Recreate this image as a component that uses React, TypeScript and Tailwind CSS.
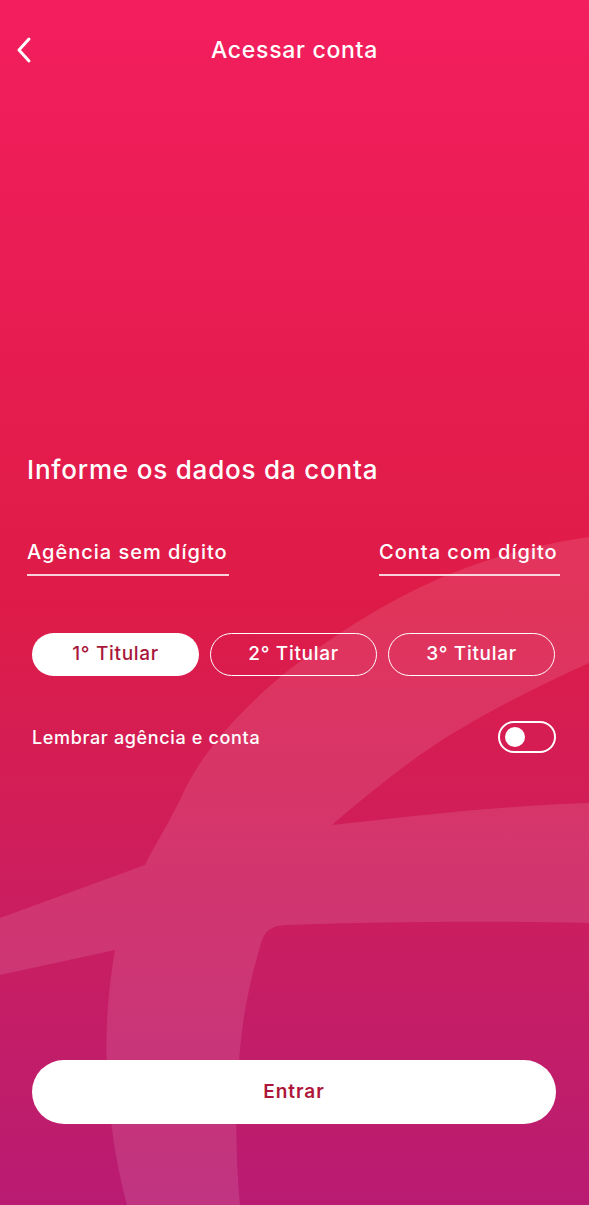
import { useState } from 'react';

const font = { fontFamily: 'Inter, "Open Sans", sans-serif' };

const BackgroundMark = () => (
  <svg
    className="pointer-events-none absolute inset-0 h-full w-full"
    viewBox="0 0 589 1205"
    preserveAspectRatio="none"
  >
    <path
      d="M589 537 C500 550 420 578 330 640 C270 680 205 740 180 800 C165 830 152 850 145 865 L0 918 L0 975 L115 950 C108 990 104 1040 108 1080 C110 1130 118 1170 127 1205 L240 1205 C236 1160 235 1110 238 1080 C240 1030 247 990 262 940 C266 930 272 926 285 925 C400 921 500 921 589 923 L589 803 C500 806 420 815 332 825 C370 792 410 760 450 735 C495 708 540 685 589 663 Z"
      fill="#ffffff"
      fillOpacity="0.11"
    />
  </svg>
);

const Field = ({ label, width }: { label: string; width: string }) => (
  <div className={`flex flex-col ${width}`}>
    <span className="text-[20px] leading-[28px] font-medium tracking-[1px] whitespace-nowrap text-white">
      {label}
    </span>
    <div className="mt-[8px] h-[2px] w-full bg-white/80" />
  </div>
);

const App = () => {
  const [holder, setHolder] = useState(1);
  const [remember, setRemember] = useState(false);

  return (
    <div
      className="relative h-[1205px] w-full overflow-hidden bg-linear-to-b from-[#f31e5e] via-[#de1b47] to-[#b91b72]"
      style={font}
    >
      <BackgroundMark />
      <div className="relative flex h-full flex-col">
        <header className="mt-[28px] grid h-[44px] grid-cols-[60px_1fr_60px] items-center">
          <button className="flex h-full items-center pl-[15px]">
            <svg width="18" height="28" viewBox="0 0 18 28" fill="none">
              <path
                d="M14 3 L4 14 L14 25"
                stroke="#ffffff"
                strokeWidth="3"
                strokeLinecap="round"
                strokeLinejoin="round"
              />
            </svg>
          </button>
          <h1 className="text-center text-[23px] font-medium tracking-[0.7px] text-white">
            Acessar conta
          </h1>
          <div />
        </header>

        <div className="mt-[381px] pr-[29px] pl-[27px]">
          <h2 className="text-[26px] leading-[34px] font-medium tracking-[0.8px] text-white">
            Informe os dados da conta
          </h2>
          <div className="mt-[51px] flex justify-between">
            <Field label="Agência sem dígito" width="w-[202px]" />
            <Field label="Conta com dígito" width="w-[181px]" />
          </div>
        </div>

        <div className="mt-[57px] grid grid-cols-3 gap-[11px] pr-[34px] pl-[32px]">
          {[1, 2, 3].map((n) => (
            <button
              key={n}
              onClick={() => setHolder(n)}
              className={
                holder === n
                  ? 'h-[43px] rounded-full bg-white text-[19px] font-medium tracking-[0.7px] text-[#a8173b]'
                  : 'h-[43px] rounded-full border-[1.5px] border-white text-[19px] font-medium tracking-[0.7px] text-white'
              }
            >
              {n}° Titular
            </button>
          ))}
        </div>

        <div className="mt-[45px] flex items-center justify-between pr-[33px] pl-[32px]">
          <span className="text-[18px] font-medium tracking-[0.65px] text-white">
            Lembrar agência e conta
          </span>
          <button
            onClick={() => setRemember(!remember)}
            className="flex h-[32px] w-[58px] items-center rounded-full border-2 border-white px-[5px]"
          >
            <span className="h-[20px] w-[20px] rounded-full bg-white" />
          </button>
        </div>

        <div className="mt-auto mb-[81px] pr-[33px] pl-[32px]">
          <button className="h-[64px] w-full rounded-full bg-white text-[19px] font-semibold tracking-[1px] text-[#ad1638]">
            Entrar
          </button>
        </div>
      </div>
    </div>
  );
};

export default App;
